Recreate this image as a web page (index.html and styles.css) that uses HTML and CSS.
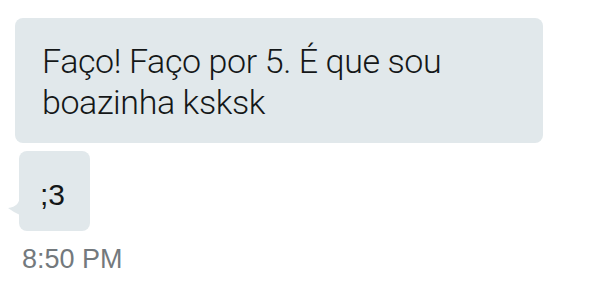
FILE: index.html
```html
<!DOCTYPE html>
<html>
  <head>
    <title>Mensagens</title>
    <link rel="stylesheet" href="styles.css">
  </head>
  <body>
    <div class="thread">
      <div class="bubble big">Faço! Faço por 5. É que sou<br>boazinha ksksk</div>
      <div class="bubble small">
        <svg class="tail" width="12" height="24" viewBox="0 0 12 24">
          <path d="M12 0 C12 8 8 12 0 13 C4 16 8 18 12 20 Z" fill="#e1e8eb"/>
        </svg>
        <span>;3</span>
      </div>
      <div class="time">8:50 PM</div>
    </div>
  </body>
</html>
```

FILE: styles.css
```css
body {
  margin: 0;
  background: #ffffff;
}

.thread {
  display: flex;
  flex-direction: column;
  align-items: flex-start;
  padding: 18px 0 0 15px;
}

.bubble {
  background: #e1e8eb;
  border-radius: 8px;
  color: #141718;
  box-sizing: border-box;
}

.big {
  width: 528px;
  height: 125px;
  padding: 23px 20px 0 27px;
  font-family: Roboto, "Liberation Sans", sans-serif;
  font-weight: 300;
  font-size: 34px;
  letter-spacing: -0.4px;
  line-height: 41px;
}

.small {
  position: relative;
  margin: 8px 0 0 4px;
  width: 71px;
  height: 80px;
  display: flex;
  justify-content: center;
  align-items: center;
  padding: 8px 4px 0 0;
  font-family: "Liberation Sans", Arial, sans-serif;
  font-size: 30px;
}

.tail {
  position: absolute;
  left: -11px;
  top: 44px;
}

.time {
  margin: 13px 0 0 7px;
  font-family: "Liberation Sans", Arial, sans-serif;
  font-size: 27px;
  color: #73797d;
}
```
